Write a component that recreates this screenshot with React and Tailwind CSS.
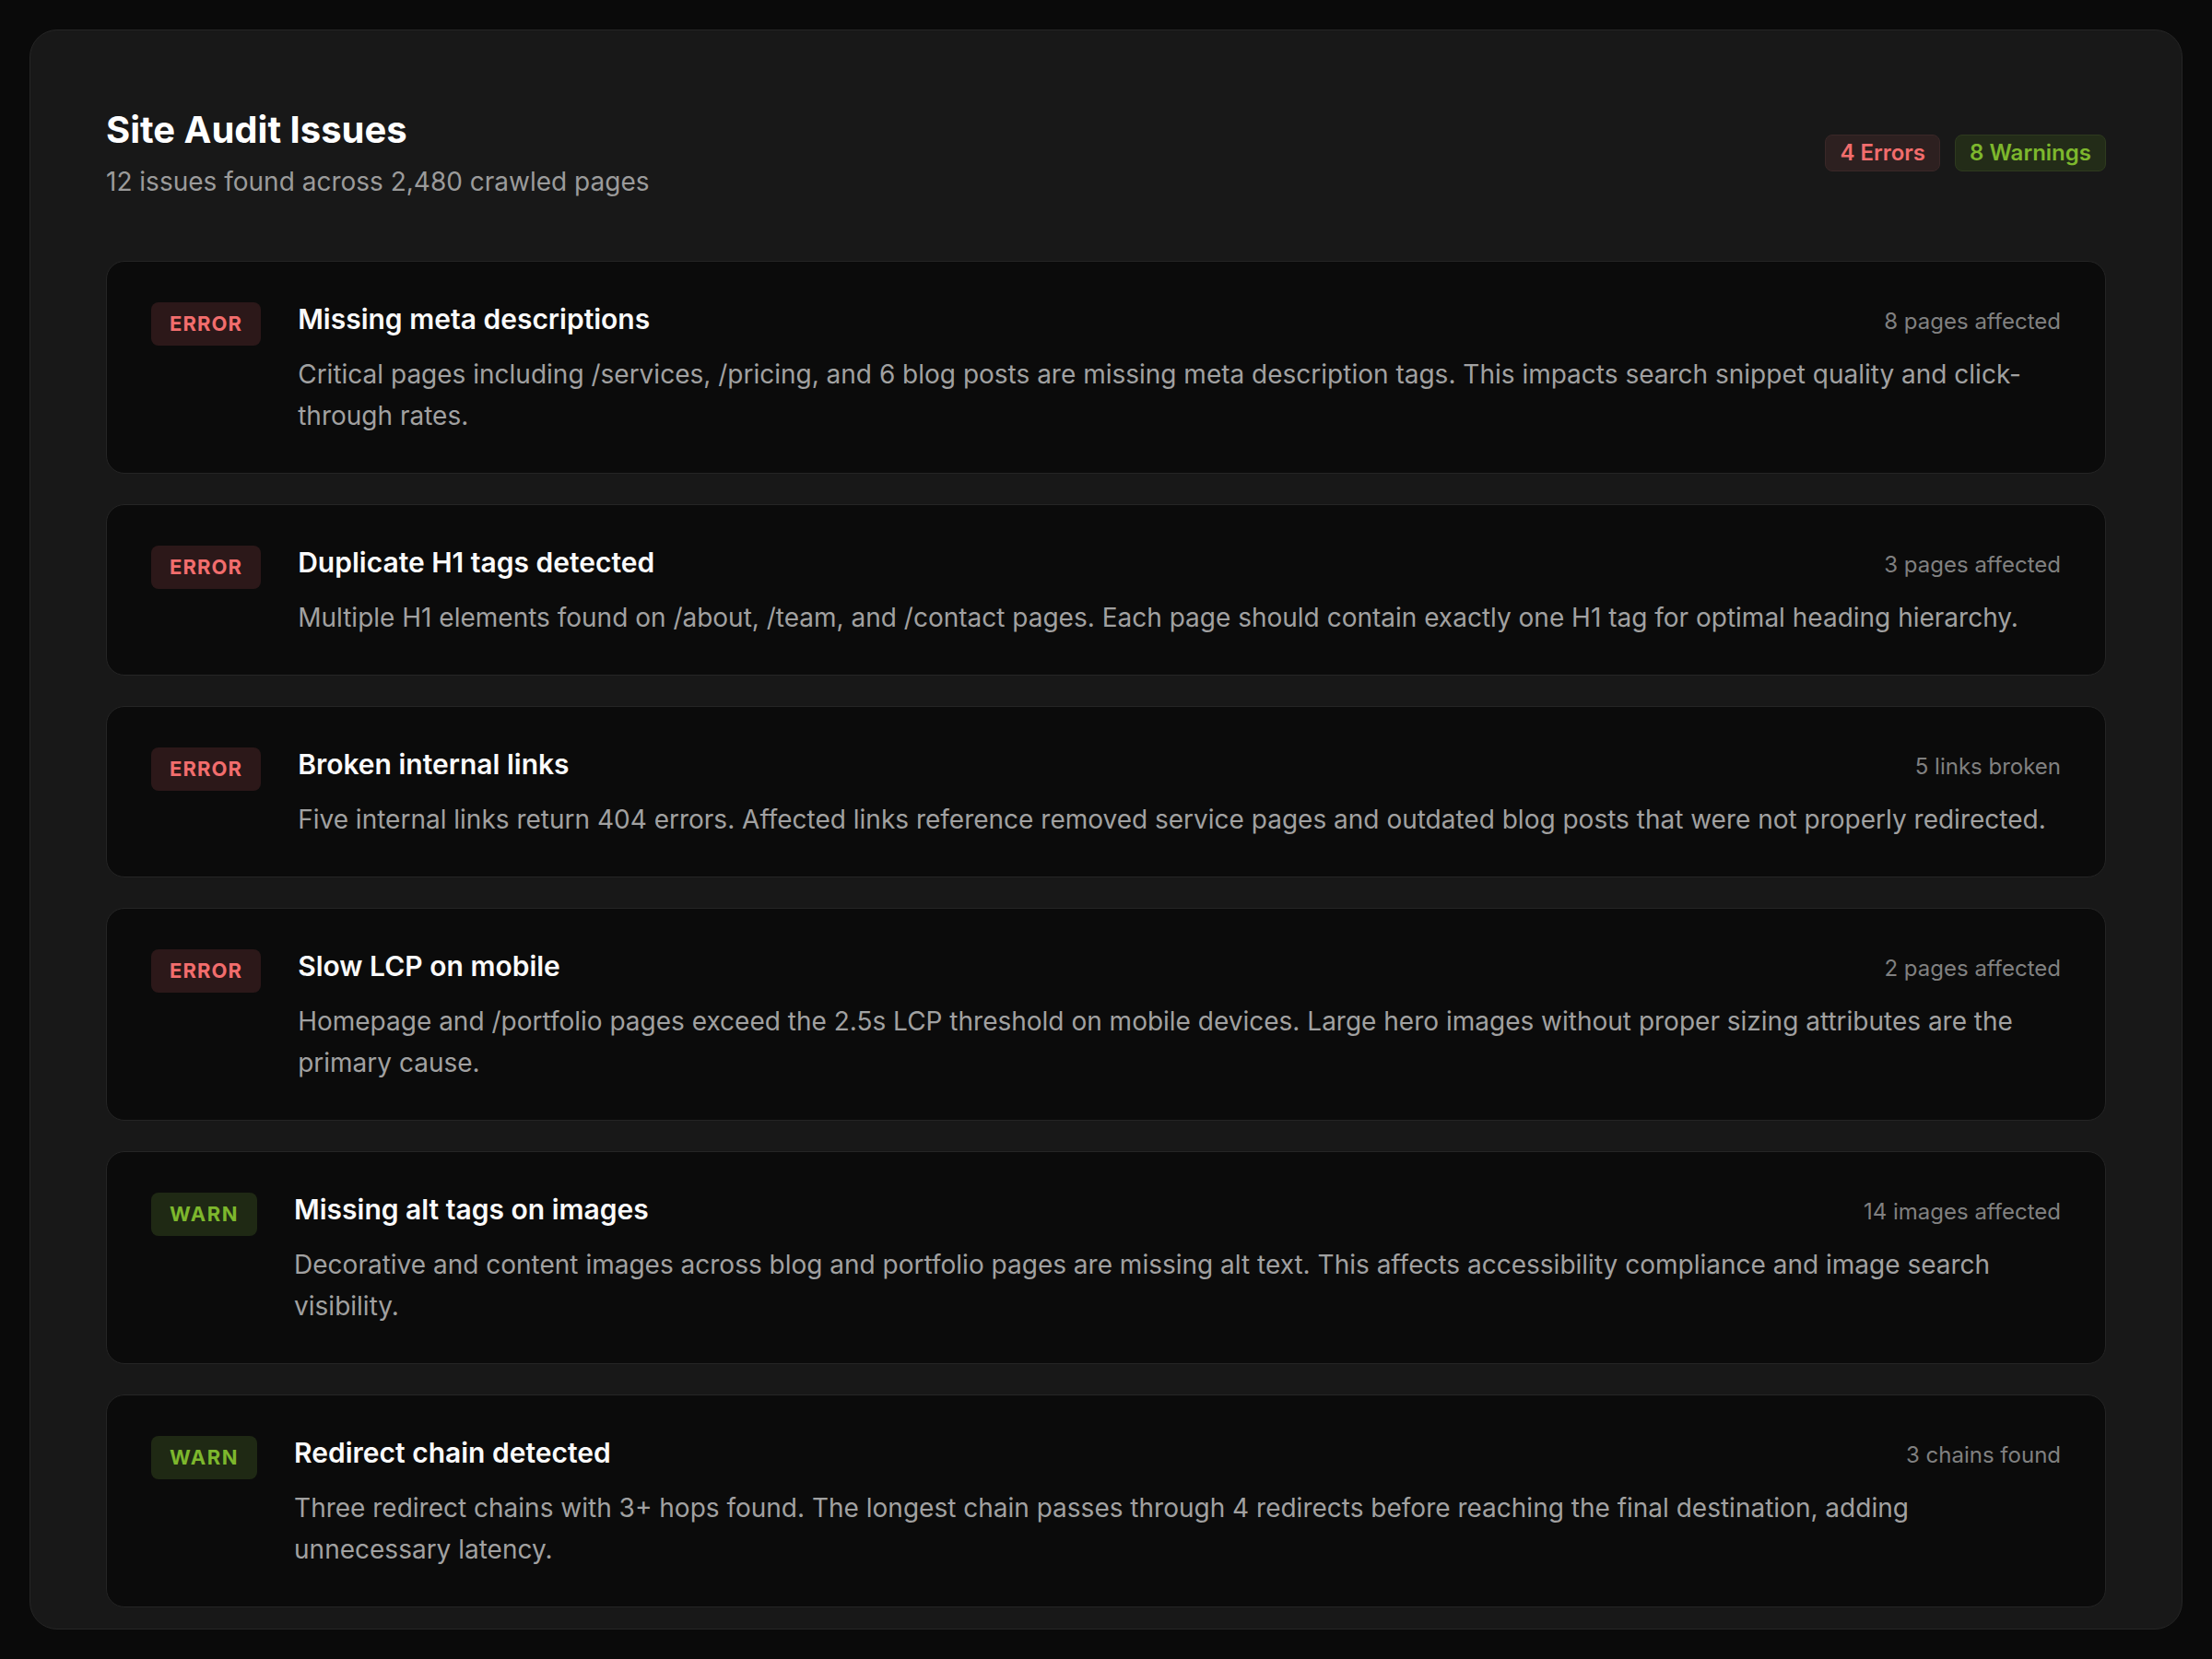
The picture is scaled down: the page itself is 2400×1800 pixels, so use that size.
const ISSUES = [
  {
    level: 'error',
    title: 'Missing meta descriptions',
    meta: '8 pages affected',
    text: 'Critical pages including /services, /pricing, and 6 blog posts are missing meta description tags. This impacts search snippet quality and click-through rates.',
  },
  {
    level: 'error',
    title: 'Duplicate H1 tags detected',
    meta: '3 pages affected',
    text: 'Multiple H1 elements found on /about, /team, and /contact pages. Each page should contain exactly one H1 tag for optimal heading hierarchy.',
  },
  {
    level: 'error',
    title: 'Broken internal links',
    meta: '5 links broken',
    text: 'Five internal links return 404 errors. Affected links reference removed service pages and outdated blog posts that were not properly redirected.',
  },
  {
    level: 'error',
    title: 'Slow LCP on mobile',
    meta: '2 pages affected',
    text: 'Homepage and /portfolio pages exceed the 2.5s LCP threshold on mobile devices. Large hero images without proper sizing attributes are the primary cause.',
  },
  {
    level: 'warn',
    title: 'Missing alt tags on images',
    meta: '14 images affected',
    text: 'Decorative and content images across blog and portfolio pages are missing alt text. This affects accessibility compliance and image search visibility.',
  },
  {
    level: 'warn',
    title: 'Redirect chain detected',
    meta: '3 chains found',
    text: 'Three redirect chains with 3+ hops found. The longest chain passes through 4 redirects before reaching the final destination, adding unnecessary latency.',
  },
];

const LEVEL_STYLES = {
  error: 'bg-[#2c1819] text-[#f26d6d] tracking-[0.05em]',
  warn: 'bg-[#1f2914] text-[#7db72d] tracking-[0.07em]',
};

function IssueCard({ issue }) {
  return (
    <div className="flex items-start gap-10 rounded-[20px] border border-[#252525] bg-[#0b0b0b] px-12 pt-11 pb-[39px]">
      <span
        className={`flex h-[47px] shrink-0 items-center rounded-lg px-5 text-[22px] font-bold ${LEVEL_STYLES[issue.level]}`}
      >
        {issue.level === 'error' ? 'ERROR' : 'WARN'}
      </span>
      <div className="min-w-0 flex-1">
        <div className="flex items-baseline justify-between gap-6">
          <h3 className="text-[30px] font-semibold leading-[36px] text-[#fafafa]">{issue.title}</h3>
          <span className="shrink-0 text-[24px] text-[#808080]">{issue.meta}</span>
        </div>
        <p className="mt-[17px] text-[28px] leading-[45px] text-[#a1a1a1]">{issue.text}</p>
      </div>
    </div>
  );
}

export default function App() {
  return (
    <div className="h-screen bg-[#0a0a0a] p-8" style={{ fontFamily: 'Inter, "Noto Sans", sans-serif' }}>
      <div className="h-full overflow-hidden rounded-[30px] border border-[#262626] bg-[#181818] px-[82px] pt-[82px]">
        {/* Header */}
        <div className="flex items-center justify-between">
          <div>
            <h1 className="text-[40px] font-bold leading-[52px] text-white">Site Audit Issues</h1>
            <p className="mt-[10px] text-[28px] leading-[40px] text-[#9b9b9b]">
              12 issues found across 2,480 crawled pages
            </p>
          </div>
          <div className="flex items-center gap-4">
            <span className="flex h-10 items-center rounded-lg border border-[#3a2828] bg-[#2d2020] px-[15px] text-[24px] font-semibold text-[#f26d6d]">
              4 Errors
            </span>
            <span className="flex h-10 items-center rounded-lg border border-[#2e3a1f] bg-[#232c18] px-[15px] text-[24px] font-semibold text-[#7db72d]">
              8 Warnings
            </span>
          </div>
        </div>

        {/* Issue list */}
        <div className="mt-[66px] flex flex-col gap-[33px]">
          {ISSUES.map((issue) => (
            <IssueCard key={issue.title} issue={issue} />
          ))}
        </div>
      </div>
    </div>
  );
}
